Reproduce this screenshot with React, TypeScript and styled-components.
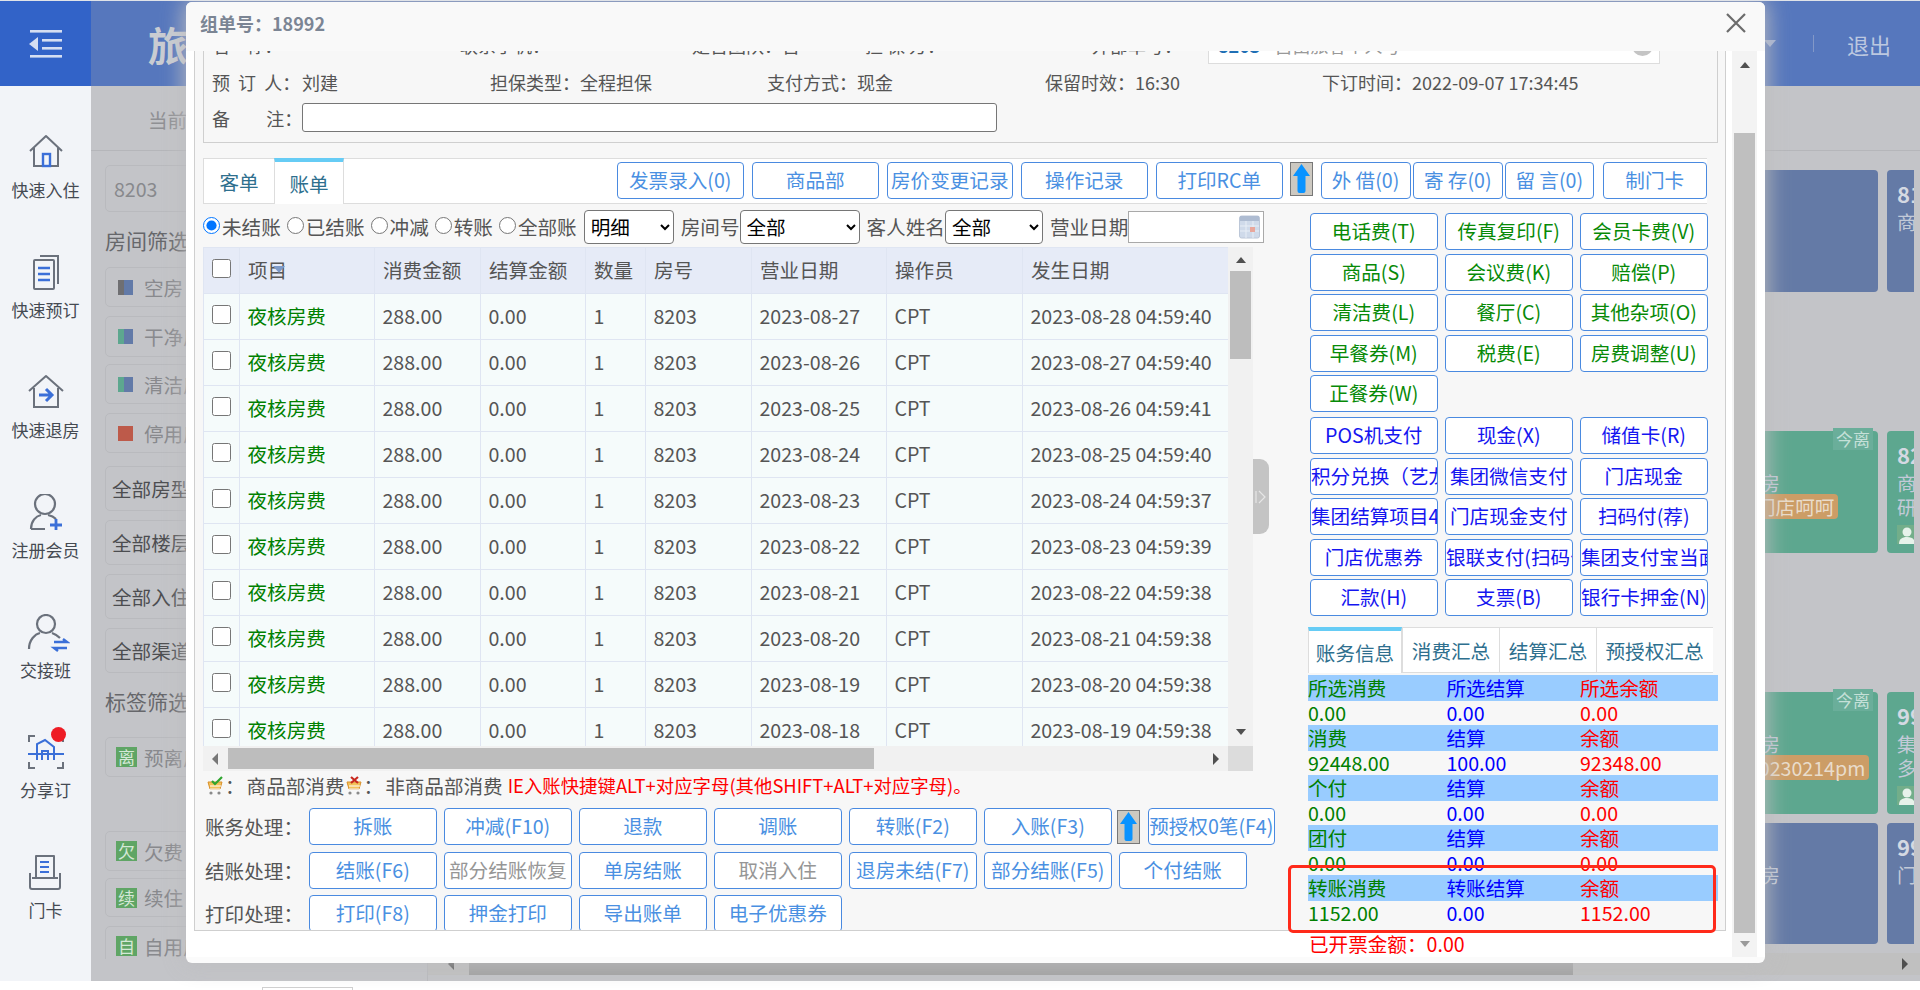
import React from "react";
import styled, { createGlobalStyle, css } from "styled-components";

const GlobalStyle = createGlobalStyle`
  html, body { margin: 0; padding: 0; height: 100%; overflow: hidden; background: #fff; }
  body, input, select, button, table { font-family: "Noto Sans CJK SC", "Noto Sans", "Liberation Sans", sans-serif; }
  * { box-sizing: border-box; }
`;

const COLON = "\uFF1A";

const Page = styled.div`
  position: relative;
  width: 1920px;
  height: 990px;
  overflow: hidden;
  background: #fff;
  border-top: 1px solid #e0e3e8;
`;
const Main = styled.div`display: flex; height: 980px; background: #c3c4c8;`;
const BottomStrip = styled.div`height: 9px; background: #fff; padding: 6px 0 0 262px;`;
const StripBox = styled.div`width: 91px; height: 3px; border: 1px solid #d0d0d0; border-bottom: 0;`;

/* ---------- sidebar ---------- */
const Sidebar = styled.aside`width: 91px; flex: none; background: #f2f4f8;`;
const MenuBlock = styled.div`
  height: 85px; background: #3263c8;
  display: flex; align-items: center; justify-content: center; padding-right: 2px;
`;
const NavList = styled.nav`padding-top: 25px;`;
const NavItem = styled.div`
  height: 120px; padding-top: 23px;
  display: flex; flex-direction: column; align-items: center;
`;
const NavIcon = styled.div`width: 40px; height: 36px; position: relative;`;
const NavLabel = styled.div`margin-top: 8px; font-size: 17px; line-height: 24px; color: #454a52; white-space: nowrap;`;
const RedDot = styled.span`
  position: absolute; right: 0; top: -7px; width: 15px; height: 15px; border-radius: 50%; background: #ee1c25;
`;

/* ---------- backdrop content ---------- */
const Content = styled.div`flex: 1; min-width: 0; display: flex; flex-direction: column;`;
const TopBar = styled.header`
  height: 85px; flex: none; background: #5677bd; display: flex; align-items: center; padding: 0 29px 0 57px;
`;
const BrandText = styled.div`font-size: 40px; font-weight: 700; color: #c9ccd2; white-space: nowrap;`;
const TopRight = styled.div`margin-left: auto; display: flex; align-items: center;`;
const Caret = styled.span`
  width: 0; height: 0; border-left: 6px solid transparent; border-right: 6px solid transparent; border-top: 7px solid #a5b3d4;
`;
const TopDivider = styled.span`width: 1px; height: 17px; background: #8298c8; margin: 0 33px 0 37px;`;
const LogoutText = styled.span`font-size: 22px; color: #bcc8e0;`;
const CrumbRow = styled.div`
  height: 65px; flex: none; padding: 20px 0 0 57px; font-size: 19.6px; line-height: 28px; color: #8f9094;
  border-bottom: 1px solid #b5b6ba;
`;
const WorkArea = styled.div`flex: 1; display: flex; min-height: 0;`;
const FilterCol = styled.div`width: 337px; flex: none; border-right: 1px solid #b8b9bd; position: relative; padding: 14px 0 0 14px;`;
const FilterClip = styled.div`height: 794px; overflow: hidden; width: 322px;`;
const FilterBox = styled.div<{ $h: number; $mt?: number; $dark?: boolean; $pl?: number }>`
  height: ${(p) => p.$h}px; margin-top: ${(p) => p.$mt ?? 0}px; width: 300px;
  border: 1px solid #b9babe; border-radius: 5px; display: flex; align-items: center; padding-left: ${(p) => p.$pl ?? 12}px;
  font-size: 19.6px; white-space: nowrap; color: ${(p) => (p.$dark ? "#4c4d50" : "#88898d")};
`;
const FilterHeading = styled.div<{ $h: number }>`
  height: ${(p) => p.$h}px; padding-top: 12px; font-size: 21px; line-height: 32px; color: #66676b;
`;
const Swatch = styled.span<{ $a: string; $b: string }>`
  width: 15px; height: 15px; margin-right: 11px; flex: none;
  background: linear-gradient(90deg, ${(p) => p.$a} 0 40%, ${(p) => p.$b} 40% 100%);
`;
const TagGlyph = styled.span`
  width: 21px; height: 20px; line-height: 20px; margin-right: 7px; margin-left: -2px; flex: none; background: #5fa565; color: #d4e8d6;
  text-align: center; font-size: 17px;
`;
const RightArea = styled.div`flex: 1; min-width: 0; display: flex; flex-direction: column; align-items: flex-end;`;
const CardClip = styled.div`width: 234px; height: 783px; margin: 19px 6px 0 0; overflow: hidden; flex: none;`;
const CardGrid = styled.div`display: grid; grid-template-columns: 198px 198px; grid-auto-rows: 121.5px; gap: 9px;`;
const Card = styled.div<{ $green?: boolean; $pl?: number }>`
  position: relative; border-radius: 4px; padding: 6px 8px 0 ${(p) => p.$pl ?? 10}px;
  background: ${(p) => (p.$green ? "#5da78f" : "#647aa6")}; color: #c3cad8; font-size: 19.6px; line-height: 24px; white-space: nowrap;
`;
const CardNo = styled.div<{ $ml?: number }>`
  font-size: 22px; font-weight: 700; line-height: 34px; color: #d4d9e2; margin-left: ${(p) => p.$ml ?? 0}px;
`;
const CardTag = styled.div<{ $ml: number }>`
  display: inline-block; height: 25px; line-height: 25px; margin: -2px 0 0 ${(p) => p.$ml}px; padding: 0 4px; border-radius: 4px; background: #cc9d66; color: #e9dccb;
`;
const CardBadge = styled.div`
  position: absolute; right: 5px; top: -3px; width: 40px; height: 22px; line-height: 22px; text-align: center; background: #6aae9a; color: #c5e0d8; font-size: 17px;
`;
const CardPerson = styled.div`
  width: 20px; height: 19px; margin-top: 6px; background: #73ae8a; display: flex; align-items: flex-end; justify-content: center;
`;
const PageScroll = styled.div`
  width: 100%; height: 22px; margin-bottom: 8px; flex: none; background: #c0c0c0; display: flex; align-items: center; padding: 0 12px 0 20px;
`;
const PageThumb = styled.div`width: 1104px; height: 22px; margin-left: 15px; background: #a0a0a0;`;
const Tri = styled.span<{ $dir: "up" | "down" | "left" | "right"; $c?: string; $ml?: string }>`
  display: block; width: 0; height: 0; flex: none; margin-left: ${(p) => p.$ml ?? "0"};
  ${(p) => {
    const c = p.$c ?? "#505050";
    if (p.$dir === "up") return css`border-left: 5px solid transparent; border-right: 5px solid transparent; border-bottom: 6px solid ${c};`;
    if (p.$dir === "down") return css`border-left: 5px solid transparent; border-right: 5px solid transparent; border-top: 6px solid ${c};`;
    if (p.$dir === "left") return css`border-top: 6px solid transparent; border-bottom: 6px solid transparent; border-right: 6px solid ${c};`;
    return css`border-top: 6px solid transparent; border-bottom: 6px solid transparent; border-left: 6px solid ${c};`;
  }}
`;

/* ---------- modal ---------- */
const Modal = styled.section`
  position: absolute; left: 186px; top: 1px; width: 1579px; height: 961px; background: #fbfbfb; border-radius: 6px;
  box-shadow: 0 0 22px 2px rgba(190, 190, 192, 0.95); color: #555;
`;
const TitleBar = styled.div`
  height: 49px; display: flex; align-items: center; justify-content: space-between; padding: 0 19px 7px 14px; background: #f9f9f9; border-radius: 6px 6px 0 0;
`;
const TitleText = styled.div`font-size: 18px; font-weight: 700; color: #7b8594;`;
const CloseBtn = styled.div`width: 20px; height: 20px; display: flex;`;
const ModalBody = styled.div`height: 906px; display: flex; padding-left: 8px; background: #fff;`;
const FrameCol = styled.div`width: 1532px; flex: none; display: flex; flex-direction: column;`;
const Frame = styled.div`
  height: 880px; flex: none; overflow: hidden; background: #f7f7f7; border: 1px solid #cfcfcf; border-top: 0; padding-left: 8px;
`;
const FrameFoot = styled.div`height: 26px; padding-left: 1115px; font-size: 19.6px; line-height: 26px; color: #f00; white-space: nowrap;`;
const ModalScroll = styled.div`
  width: 25px; margin-left: 6px; flex: none; background: #f3f3f3; display: flex; flex-direction: column; align-items: center; padding-top: 11px;
`;
const ModalThumb = styled.div`width: 21px; height: 800px; margin-top: 65px; background: #bfbfbf;`;
const ModalScrollEnd = styled.div`margin-top: 8px;`;

const InfoBox = styled.div`
  margin-top: -22px; width: 1515px; height: 114px; padding: 0 0 0 8px; border: 1px solid #cfcfcf; border-top: 0; font-size: 18px; color: #555;
`;
const InfoRow = styled.div<{ $pb?: number }>`
  height: 35.5px; padding-bottom: ${(p) => p.$pb ?? 0}px; display: flex; align-items: center; white-space: pre;
`;
const InfoCell = styled.div<{ $w: number }>`width: ${(p) => p.$w}px; flex: none; display: flex; align-items: center;`;
const InfoLabel = styled.span<{ $w?: number }>`display: inline-block; width: ${(p) => (p.$w ? `${p.$w}px` : "auto")}; flex: none;`;
const RemarkInput = styled.input`
  width: 695px; height: 29px; border: 1px solid #767676; border-radius: 3px; background: #fff; outline: none;
`;
const GuestBox = styled.div`
  width: 452px; height: 35px; margin-top: 3px; flex: none; background: #fff; border: 1px solid #ddd; display: flex; align-items: center; padding: 0 9px 3px; position: relative; color: #999;
`;
const GuestNo = styled.b`color: #1f6fb5; margin-right: 14px;`;
const GuestClear = styled.span`position: absolute; right: 6px; top: 5px; width: 21px; height: 21px; border-radius: 50%; background: #c4c4c4;`;

const TabStrip = styled.div`
  margin-top: 15px; width: 1504px; height: 46px; background: #fff; border-top: 1px solid #ddd; border-bottom: 1px solid #ddd;
  display: flex; align-items: flex-start; position: relative;
`;
const StripTab = styled.div<{ $on?: boolean; $w: number }>`
  width: ${(p) => p.$w}px; height: ${(p) => (p.$on ? 46 : 44)}px; flex: none; text-align: center; font-size: 19.6px; color: #2e6f8e; background: #fff;
  border-left: 1px solid #ddd; border-right: ${(p) => (p.$on ? "1px solid #ddd" : "0")};
  border-top: ${(p) => (p.$on ? "4px solid #66ccf5" : "0")}; margin-top: ${(p) => (p.$on ? "-1px" : "0")};
  line-height: ${(p) => (p.$on ? "44px" : "46px")};
`;
const StripTools = styled.div`margin-left: auto; display: flex; padding-top: 3px;`;

const toneColor = { link: "#4a90e2", green: "#078a07", blue: "#1515f0", gray: "#969696" } as const;
type Tone = keyof typeof toneColor;
const Btn = styled.div<{ $w?: number; $h?: number; $ml?: number; $tone?: Tone }>`
  width: ${(p) => p.$w ?? 127.5}px; height: ${(p) => p.$h ?? 37}px; margin-left: ${(p) => p.$ml ?? 0}px; flex: none;
  border: 1.2px solid #4a8ae0; border-radius: 4px; background: #fff; text-align: center; overflow: hidden; white-space: nowrap;
  font-size: 19.6px; line-height: 34px; color: ${(p) => toneColor[p.$tone ?? "link"]};
`;
const ArrowBtn = styled.div<{ $ml: number }>`
  width: 23px; height: 34px; margin-left: ${(p) => p.$ml}px; flex: none; background: #cdc9c1; border: 1px solid #777;
  display: flex; align-items: center; justify-content: center;
`;

const Split = styled.div`display: flex; align-items: flex-start;`;
const LeftPane = styled.div`width: 1105px; flex: none; position: relative;`;
const FilterRow = styled.div`height: 43px; display: flex; align-items: center; font-size: 19.6px; color: #555; white-space: nowrap; padding-top: 2px;`;
const Radio = styled.input`width: 17px; height: 17px; margin: -3px 2px 0 0; flex: none;`;
const RadioText = styled.span`margin-right: 6px;`;
const Sel = styled.select<{ $w: number; $ml?: number }>`
  width: ${(p) => p.$w}px; height: 34px; margin-left: ${(p) => p.$ml ?? 0}px; margin-right: 7px; flex: none; font-size: 19.6px; color: #000; background: #fff; border: 1px solid #767676; border-radius: 4px; padding: 0 0 0 2px;
`;
const DateBox = styled.div`
  width: 136px; height: 32px; background: #fff; border: 1px solid #a9a9a9; flex: none; display: flex; align-items: center; justify-content: flex-end; padding-right: 3px;
`;
const GridWrap = styled.div`width: 1050px; display: flex; flex-wrap: wrap; background: #f1f1f1;`;
const TableClip = styled.div`width: 1025px; height: 499px; overflow: hidden; background: #f5fbfb;`;
const Table = styled.table`width: 1025px; table-layout: fixed; border-collapse: collapse; font-size: 19.6px; color: #555;`;
const Th = styled.th`
  height: 46px; padding: 0 0 2px 8px; text-align: left; font-weight: 400; background: #e6ebf7; border: 1px solid #dfe5f2; white-space: nowrap; position: relative;
`;
const Td = styled.td<{ $green?: boolean }>`
  height: 46px; padding: 0 0 2px 7.5px; background: #f5fbfb; border: 1px solid #dfe5f2; white-space: nowrap; color: ${(p) => (p.$green ? "#008000" : "#555")};
`;
const Check = styled.input`display: block; width: 19px; height: 19px; margin: -3px 0 0 0;`;
const SortMark = styled.span`
  position: absolute; left: 33px; top: 18px; width: 0; height: 0; border-left: 6px solid transparent; border-right: 6px solid transparent; border-top: 7px solid #7d9ac8;
`;
const VBar = styled.div`width: 25px; height: 499px; display: flex; flex-direction: column; align-items: center; padding-top: 10px;`;
const VThumb = styled.div`width: 21px; height: 88px; margin-top: 8px; background: #bdbdbd; flex: none;`;
const VEnd = styled.div`margin-top: auto; margin-bottom: 11px;`;
const HBar = styled.div`width: 1025px; height: 25px; display: flex; align-items: center; padding: 0 9px;`;
const HThumb = styled.div`width: 646px; height: 21px; margin-left: 10px; background: #bdbdbd;`;
const HEnd = styled.div`margin-left: auto;`;
const Corner = styled.div`width: 25px; height: 25px; background: #dcdcdc;`;
const Handle = styled.div`
  position: absolute; left: 1050px; top: 255px; width: 15.5px; height: 75px; background: #c4c4c4; border-radius: 0 9px 9px 0;
  display: flex; align-items: center; justify-content: center;
`;
const Legend = styled.div`height: 37px; display: flex; align-items: center; padding: 0 0 9px 3px; font-size: 19.6px; color: #555; white-space: pre;`;
const LegendColon = styled.span`margin-right: 2px;`;
const LegendHot = styled.span`margin-left: 5px; font-size: 18.4px; color: #f00;`;
const ActionRows = styled.div`display: flex; flex-direction: column; gap: 6.5px;`;
const ActionRow = styled.div`display: flex; align-items: center; gap: 7.5px; padding-left: 2px; width: 1105px;`;
const ActionLabel = styled.div`width: 96.5px; flex: none; font-size: 19.6px; color: #555; white-space: nowrap;`;

const RightPane = styled.div`width: 410px; margin-left: 0; flex: none;`;
const KeyGrid = styled.div<{ $mt: number }>`
  margin: ${(p) => p.$mt}px 0 0 2px; display: grid; grid-template-columns: repeat(3, 127.5px); grid-auto-rows: 37px; gap: 3.5px 7.5px;
`;
const SubTabs = styled.div`
  margin-top: 11px; width: 405px; height: 46px; background: #fff; border-top: 1px solid #ddd; border-bottom: 1px solid #ddd; display: flex;
`;
const Money = styled.div`margin-top: 2px; width: 410px; font-size: 19.6px;`;
const MoneyRow = styled.div<{ $head?: boolean }>`
  height: ${(p) => (p.$head ? 26 : 24)}px; line-height: ${(p) => (p.$head ? 26 : 24)}px; display: grid; grid-template-columns: 138.5px 133.5px 1fr;
  background: ${(p) => (p.$head ? "#99ccff" : "transparent")};
`;
const MoneyCell = styled.span<{ $c: string }>`color: ${(p) => p.$c}; white-space: nowrap;`;
const Callout = styled.div`
  position: absolute; left: 1102px; top: 863px; width: 428px; height: 68px; border: 3px solid #ff2a1a; border-radius: 5px; pointer-events: none;
`;

/* ---------- icons ---------- */
const G = "#6b717c";
const B = "#3b6fd8";
const Svg = styled.svg`display: block;`;

const MenuIcon = () => (
  <Svg width="34" height="28" viewBox="0 0 34 28" fill="#d5def2">
    <rect x="2" y="0" width="32" height="2.6" />
    <rect x="2" y="25" width="32" height="2.6" />
    <rect x="14" y="9" width="20" height="2.6" />
    <rect x="14" y="17" width="20" height="2.6" />
    <path d="M10 7v14L1 14z" />
  </Svg>
);
const HomeIcon = () => (
  <Svg width="40" height="36" viewBox="0 0 40 36" fill="none" stroke={G} strokeWidth="2">
    <path d="M4 17 20 2l16 15" strokeLinejoin="round" />
    <path d="M8 14v18h24V14" />
    <rect x="17" y="20" width="7" height="12" stroke={B} strokeWidth="2.4" />
  </Svg>
);
const DocsIcon = () => (
  <Svg width="40" height="36" viewBox="0 0 40 36" fill="none" stroke={G} strokeWidth="2">
    <path d="M14 2h18v28" />
    <rect x="8" y="6" width="20" height="29" rx="1" />
    <path d="M12 14h12M12 20h12M12 26h12" stroke={B} strokeWidth="2.6" />
  </Svg>
);
const CheckoutIcon = () => (
  <Svg width="40" height="36" viewBox="0 0 40 36" fill="none" stroke={G} strokeWidth="2">
    <path d="M3 17 20 2l17 15" strokeLinejoin="round" />
    <path d="M8 14v19h24V14" />
    <path d="M13 21h11M20 15l6 6-6 6" stroke={B} strokeWidth="3" />
  </Svg>
);
const MemberIcon = () => (
  <Svg width="40" height="36" viewBox="0 0 40 36" fill="none" stroke={G} strokeWidth="2.2">
    <circle cx="19" cy="10" r="10" />
    <path d="M5 35c0-8 5-13 10-14M22 21c3 .6 6 2 8 4M5 35h14" />
    <path d="M30 25v11M24 31h12" stroke={B} strokeWidth="2.8" />
  </Svg>
);
const SwapIcon = () => (
  <Svg width="44" height="38" viewBox="0 0 44 38" fill="none" stroke={G} strokeWidth="2.2">
    <circle cx="20" cy="10" r="9" />
    <path d="M3 35c0-9 6-15 11-16M26 19c3 1 6 3 8 5" />
    <path d="M28 28h13l-4-3M41 34H28l4 3" stroke={B} strokeWidth="2.4" />
  </Svg>
);
const ShareIcon = () => (
  <Svg width="40" height="36" viewBox="0 0 40 36" fill="none" stroke={G} strokeWidth="2">
    <path d="M9 2H3v6M31 2h6v6M3 28v6h6M37 28v6h-6" />
    <path d="M2 20h36" stroke={B} />
    <path d="M11 26V10l8-4 9 7v13M16 26v-9h6v9" stroke={B} />
  </Svg>
);
const CardIcon = () => (
  <Svg width="40" height="36" viewBox="0 0 40 36" fill="none" stroke={G} strokeWidth="2">
    <path d="M10 24V2h18v22M4 19v14a2 2 0 0 0 2 2h26a2 2 0 0 0 2-2V19" strokeLinejoin="round" />
    <path d="M6 24h26" />
    <path d="M14 8h9M14 13h9M14 18h9" stroke={B} />
  </Svg>
);
const CloseIcon = () => (
  <Svg width="20" height="20" viewBox="0 0 20 20" stroke="#6b6b6b" strokeWidth="2.2">
    <path d="M1 1l18 18M19 1 1 19" />
  </Svg>
);
const UpArrow = () => (
  <Svg width="17" height="30" viewBox="0 0 17 30" fill="#0a93ff">
    <path d="M8.5 0 17 12h-4.5v15a2 2 0 0 1-2 2h-4a2 2 0 0 1-2-2V12H0z" />
  </Svg>
);
const CalendarIcon = () => (
  <Svg width="21" height="24" viewBox="0 0 21 24">
    <rect x="0.5" y="1" width="20" height="22" rx="2" fill="#cfdaea" stroke="#bcc7d8" />
    <rect x="1" y="1" width="19" height="5" fill="#aebcd2" />
    <path d="M1 11h19M1 16h19M7 6v17M14 6v17" stroke="#e8eef6" />
    <rect x="11" y="12" width="5" height="5" fill="#e8a79c" />
  </Svg>
);
const HandleGlyph = () => (
  <Svg width="11" height="14" viewBox="0 0 11 14" fill="none" stroke="#e6e6e6" strokeWidth="1.2">
    <path d="M1 1v12M4 1l6 6-6 6" />
  </Svg>
);
const Cart = ({ bad }: { bad?: boolean }) => (
  <Svg width="19" height="19" viewBox="0 0 19 19" fill="none">
    <path d="M2 6h14l-2 7H4z" fill="#f3c25a" stroke="#d98f2b" />
    <path d="M4 10h11M4 13h10" stroke="#fff" />
    <circle cx="5" cy="17" r="1.6" fill="#8a8a8a" />
    <circle cx="13" cy="17" r="1.6" fill="#8a8a8a" />
    {bad ? (
      <path d="M6 1l7 6M13 1 6 7" stroke="#c8281e" strokeWidth="2.2" />
    ) : (
      <path d="M6 5l3 3 7-7" stroke="#2fa52f" strokeWidth="2.2" />
    )}
  </Svg>
);
const PersonIcon = () => (
  <Svg width="16" height="17" viewBox="0 0 16 17" fill="#e6f2ea">
    <circle cx="8" cy="5" r="4.5" />
    <path d="M0 17c0-5 3-7 8-7s8 2 8 7z" />
  </Svg>
);

/* ---------- data ---------- */
const navItems: [string, React.ReactNode, boolean?][] = [
  ["快速入住", <HomeIcon />],
  ["快速预订", <DocsIcon />],
  ["快速退房", <CheckoutIcon />],
  ["注册会员", <MemberIcon />],
  ["交接班", <SwapIcon />],
  ["分享订", <ShareIcon />, true],
  ["门卡", <CardIcon />],
];
const ledger = [
  ["2023-08-27", "2023-08-28 04:59:40"],
  ["2023-08-26", "2023-08-27 04:59:40"],
  ["2023-08-25", "2023-08-26 04:59:41"],
  ["2023-08-24", "2023-08-25 04:59:40"],
  ["2023-08-23", "2023-08-24 04:59:37"],
  ["2023-08-22", "2023-08-23 04:59:39"],
  ["2023-08-21", "2023-08-22 04:59:38"],
  ["2023-08-20", "2023-08-21 04:59:38"],
  ["2023-08-19", "2023-08-20 04:59:38"],
  ["2023-08-18", "2023-08-19 04:59:38"],
];
const greenKeys = [
  "电话费(T)", "传真复印(F)", "会员卡费(V)",
  "商品(S)", "会议费(K)", "赔偿(P)",
  "清洁费(L)", "餐厅(C)", "其他杂项(O)",
  "早餐券(M)", "税费(E)", "房费调整(U)",
  "正餐券(W)",
];
const blueKeys = [
  "POS机支付", "现金(X)", "储值卡(R)",
  "积分兑换（艺龙）", "集团微信支付", "门店现金",
  "集团结算项目4", "门店现金支付", "扫码付(荐)",
  "门店优惠券", "银联支付(扫码付)", "集团支付宝当面付",
  "汇款(H)", "支票(B)", "银行卡押金(N)",
];
const money: [string, string, string, string, string, string][] = [
  ["所选消费", "所选结算", "所选余额", "0.00", "0.00", "0.00"],
  ["消费", "结算", "余额", "92448.00", "100.00", "92348.00"],
  ["个付", "结算", "余额", "0.00", "0.00", "0.00"],
  ["团付", "结算", "余额", "0.00", "0.00", "0.00"],
  ["转账消费", "转账结算", "余额", "1152.00", "0.00", "1152.00"],
];

const Triple = ({ v }: { v: string[] }) => (
  <>
    <MoneyCell $c="#008000">{v[0]}</MoneyCell>
    <MoneyCell $c="#0000ff">{v[1]}</MoneyCell>
    <MoneyCell $c="#ff0000">{v[2]}</MoneyCell>
  </>
);

export default function App() {
  return (
    <Page>
      <GlobalStyle />
      <Main>
        <Sidebar>
          <MenuBlock><MenuIcon /></MenuBlock>
          <NavList>
            {navItems.map(([label, icon, dot]) => (
              <NavItem key={label}>
                <NavIcon>
                  {icon}
                  {dot && <RedDot />}
                </NavIcon>
                <NavLabel>{label}</NavLabel>
              </NavItem>
            ))}
          </NavList>
        </Sidebar>
        <Content>
          <TopBar>
            <BrandText>旅客管理</BrandText>
            <TopRight>
              <Caret />
              <TopDivider />
              <LogoutText>退出</LogoutText>
            </TopRight>
          </TopBar>
          <CrumbRow>当前位置</CrumbRow>
          <WorkArea>
            <FilterCol>
              <FilterClip>
                <FilterBox $h={47} $pl={8}>8203</FilterBox>
                <FilterHeading $h={55}>房间筛选</FilterHeading>
                <FilterBox $h={40}><Swatch $a="#6f6f72" $b="#627aa8" />空房</FilterBox>
                <FilterBox $h={41} $mt={9}><Swatch $a="#5da78f" $b="#627aa8" />干净房</FilterBox>
                <FilterBox $h={40} $mt={7}><Swatch $a="#5da78f" $b="#627aa8" />清洁房</FilterBox>
                <FilterBox $h={40} $mt={9}><Swatch $a="#bd5a4a" $b="#bd5a4a" />停用房</FilterBox>
                <FilterBox $h={45} $mt={13} $dark $pl={6}>全部房型</FilterBox>
                <FilterBox $h={45} $mt={9} $dark $pl={6}>全部楼层</FilterBox>
                <FilterBox $h={45} $mt={9} $dark $pl={6}>全部入住类型</FilterBox>
                <FilterBox $h={45} $mt={9} $dark $pl={6}>全部渠道</FilterBox>
                <FilterHeading $h={64}>标签筛选</FilterHeading>
                <FilterBox $h={40}><TagGlyph>离</TagGlyph>预离房</FilterBox>
                <FilterBox $h={40} $mt={54}><TagGlyph>欠</TagGlyph>欠费</FilterBox>
                <FilterBox $h={39} $mt={7}><TagGlyph>续</TagGlyph>续住</FilterBox>
                <FilterBox $h={40} $mt={9}><TagGlyph>自</TagGlyph>自用房</FilterBox>
              </FilterClip>
            </FilterCol>
            <RightArea>
              <CardClip>
                <CardGrid>
                  <Card />
                  <Card><CardNo>8101</CardNo>商务</Card>
                  <div /><div />
                  <Card $green $pl={41}>
                    <CardBadge>今离</CardBadge>
                    <CardNo $ml={-31}>8201</CardNo>
                    <div>大床房</div>
                    <CardTag $ml={31}>门店呵呵</CardTag>
                  </Card>
                  <Card $green><CardNo>8203</CardNo><div>商务</div><div>研发</div><CardPerson><PersonIcon /></CardPerson></Card>
                  <div /><div />
                  <Card $green $pl={41}>
                    <CardBadge>今离</CardBadge>
                    <CardNo $ml={-31}>9101</CardNo>
                    <div>大床房</div>
                    <CardTag $ml={23}>20230214pm</CardTag>
                  </Card>
                  <Card $green><CardNo>9901</CardNo><div>集团</div><div>多人</div><CardPerson><PersonIcon /></CardPerson></Card>
                  <Card $pl={41}><CardNo $ml={-31}>9201</CardNo><div>大床房</div></Card>
                  <Card><CardNo>9902</CardNo><div>门店</div></Card>
                </CardGrid>
              </CardClip>
              <PageScroll>
                <Tri $dir="left" />
                <PageThumb />
                <Tri $dir="right" $ml="auto" />
              </PageScroll>
            </RightArea>
          </WorkArea>
        </Content>
      </Main>
      <BottomStrip><StripBox /></BottomStrip>

      <Modal>
        <TitleBar>
          <TitleText>组单号{COLON}18992</TitleText>
          <CloseBtn><CloseIcon /></CloseBtn>
        </TitleBar>
        <ModalBody>
          <FrameCol>
            <Frame>
              <InfoBox>
                <InfoRow $pb={3}>
                  <InfoCell $w={248}>名    称{COLON}</InfoCell>
                  <InfoCell $w={232}>联系手机{COLON}</InfoCell>
                  <InfoCell $w={173}>是否团队{COLON}否</InfoCell>
                  <InfoCell $w={227}>担 保 方{COLON}</InfoCell>
                  <InfoCell $w={116}>外部单号{COLON}</InfoCell>
                  <GuestBox><GuestNo>8203</GuestNo>自由旅客个人号<GuestClear /></GuestBox>
                </InfoRow>
                <InfoRow>
                  <InfoCell $w={278}><InfoLabel $w={90}>预  订  人{COLON}</InfoLabel>刘建</InfoCell>
                  <InfoCell $w={277}><InfoLabel $w={90}>担保类型{COLON}</InfoLabel>全程担保</InfoCell>
                  <InfoCell $w={278}><InfoLabel $w={90}>支付方式{COLON}</InfoLabel>现金</InfoCell>
                  <InfoCell $w={277}><InfoLabel $w={90}>保留时效{COLON}</InfoLabel>16:30</InfoCell>
                  <InfoCell $w={340}><InfoLabel $w={90}>下订时间{COLON}</InfoLabel>2022-09-07 17:34:45</InfoCell>
                </InfoRow>
                <InfoRow>
                  <InfoLabel $w={90}>备         注{COLON}</InfoLabel>
                  <RemarkInput readOnly />
                </InfoRow>
              </InfoBox>

              <TabStrip>
                <StripTab $w={71}>客单</StripTab>
                <StripTab $w={70} $on>账单</StripTab>
                <StripTools>
                  <Btn $w={126.5}>发票录入(0)</Btn>
                  <Btn $w={126.5} $ml={8.5}>商品部</Btn>
                  <Btn $w={126.5} $ml={8}>房价变更记录</Btn>
                  <Btn $w={126.5} $ml={8}>操作记录</Btn>
                  <Btn $w={126.5} $ml={8.5}>打印RC单</Btn>
                  <ArrowBtn $ml={7}><UpArrow /></ArrowBtn>
                  <Btn $w={90} $ml={8}>外 借(0)</Btn>
                  <Btn $w={89.5} $ml={2.5}>寄 存(0)</Btn>
                  <Btn $w={89.5} $ml={2}>留 言(0)</Btn>
                  <Btn $w={104.5} $ml={8.5}>制门卡</Btn>
                </StripTools>
              </TabStrip>

              <Split>
                <LeftPane>
                  <FilterRow>
                    <Radio type="radio" name="st" defaultChecked /><RadioText>未结账</RadioText>
                    <Radio type="radio" name="st" /><RadioText>已结账</RadioText>
                    <Radio type="radio" name="st" /><RadioText>冲减</RadioText>
                    <Radio type="radio" name="st" /><RadioText>转账</RadioText>
                    <Radio type="radio" name="st" /><span>全部账</span>
                    <Sel $w={90} $ml={7}><option>明细</option></Sel>
                    <span>房间号</span>
                    <Sel $w={120}><option>全部</option></Sel>
                    <span>客人姓名</span>
                    <Sel $w={98}><option>全部</option></Sel>
                    <span>营业日期</span>
                    <DateBox><CalendarIcon /></DateBox>
                  </FilterRow>

                  <GridWrap>
                    <TableClip>
                      <Table>
                        <colgroup>
                          {[36, 135, 106, 105, 60, 106, 135, 136, 206].map((w, i) => (
                            <col key={i} width={w} />
                          ))}
                        </colgroup>
                        <thead>
                          <tr>
                            <Th><Check type="checkbox" /></Th>
                            <Th>项目<SortMark /></Th>
                            <Th>消费金额</Th>
                            <Th>结算金额</Th>
                            <Th>数量</Th>
                            <Th>房号</Th>
                            <Th>营业日期</Th>
                            <Th>操作员</Th>
                            <Th>发生日期</Th>
                          </tr>
                        </thead>
                        <tbody>
                          {ledger.map(([biz, at]) => (
                            <tr key={biz}>
                              <Td><Check type="checkbox" /></Td>
                              <Td $green>夜核房费</Td>
                              <Td>288.00</Td>
                              <Td>0.00</Td>
                              <Td>1</Td>
                              <Td>8203</Td>
                              <Td>{biz}</Td>
                              <Td>CPT</Td>
                              <Td>{at}</Td>
                            </tr>
                          ))}
                        </tbody>
                      </Table>
                    </TableClip>
                    <VBar>
                      <Tri $dir="up" />
                      <VThumb />
                      <VEnd><Tri $dir="down" /></VEnd>
                    </VBar>
                    <HBar>
                      <Tri $dir="left" $c="#777" />
                      <HThumb />
                      <HEnd><Tri $dir="right" /></HEnd>
                    </HBar>
                    <Corner />
                  </GridWrap>
                  <Handle><HandleGlyph /></Handle>

                  <Legend>
                    <Cart /><LegendColon>{COLON}</LegendColon><span>商品部消费</span><Cart bad /><LegendColon>{COLON}</LegendColon><span>非商品部消费</span>
                    <LegendHot>IE入账快捷键ALT+对应字母(其他SHIFT+ALT+对应字母)。</LegendHot>
                  </Legend>

                  <ActionRows>
                    <ActionRow>
                      <ActionLabel>账务处理{COLON}</ActionLabel>
                      <Btn>拆账</Btn><Btn>冲减(F10)</Btn><Btn>退款</Btn><Btn>调账</Btn><Btn>转账(F2)</Btn><Btn>入账(F3)</Btn>
                      <ArrowBtn $ml={-2}><UpArrow /></ArrowBtn>
                      <Btn>预授权0笔(F4)</Btn>
                    </ActionRow>
                    <ActionRow>
                      <ActionLabel>结账处理{COLON}</ActionLabel>
                      <Btn>结账(F6)</Btn><Btn $tone="gray">部分结账恢复</Btn><Btn>单房结账</Btn><Btn $tone="gray">取消入住</Btn><Btn>退房未结(F7)</Btn><Btn>部分结账(F5)</Btn><Btn>个付结账</Btn>
                    </ActionRow>
                    <ActionRow>
                      <ActionLabel>打印处理{COLON}</ActionLabel>
                      <Btn>打印(F8)</Btn><Btn>押金打印</Btn><Btn>导出账单</Btn><Btn>电子优惠券</Btn>
                    </ActionRow>
                  </ActionRows>
                </LeftPane>

                <RightPane>
                  <KeyGrid $mt={9}>
                    {greenKeys.map((k) => <Btn key={k} $tone="green">{k}</Btn>)}
                  </KeyGrid>
                  <KeyGrid $mt={5}>
                    {blueKeys.map((k) => <Btn key={k} $tone="blue">{k}</Btn>)}
                  </KeyGrid>
                  <SubTabs>
                    <StripTab $w={94} $on>账务信息</StripTab>
                    <StripTab $w={97}>消费汇总</StripTab>
                    <StripTab $w={97}>结算汇总</StripTab>
                    <StripTab $w={116}>预授权汇总</StripTab>
                  </SubTabs>
                  <Money>
                    {money.map((m) => (
                      <React.Fragment key={m[0]}>
                        <MoneyRow $head><Triple v={m.slice(0, 3)} /></MoneyRow>
                        <MoneyRow><Triple v={m.slice(3)} /></MoneyRow>
                      </React.Fragment>
                    ))}
                  </Money>
                </RightPane>
              </Split>
            </Frame>
            <FrameFoot>已开票金额{COLON}0.00</FrameFoot>
          </FrameCol>
          <ModalScroll>
            <Tri $dir="up" />
            <ModalThumb />
            <ModalScrollEnd><Tri $dir="down" $c="#9a9a9a" /></ModalScrollEnd>
          </ModalScroll>
        </ModalBody>
        <Callout />
      </Modal>
    </Page>
  );
}
